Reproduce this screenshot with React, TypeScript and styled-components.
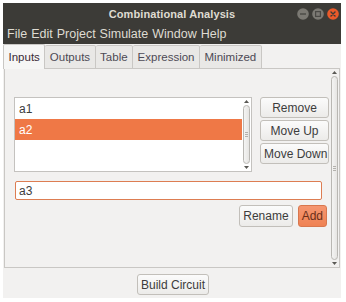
import React from "react";
import styled, { createGlobalStyle } from "styled-components";

const GlobalStyle = createGlobalStyle`
  body {
    margin: 0;
    background: #ffffff;
    font-family: "Liberation Sans", Arial, sans-serif;
  }
`;

const Window = styled.div`
  width: 338px;
  height: 295px;
  margin: 3px 0 0 3px;
  background: #f2f1f0;
  display: flex;
  flex-direction: column;
  box-sizing: border-box;
`;

const TitleBar = styled.div`
  height: 21px;
  background: #3c3b37;
  display: grid;
  grid-template-columns: 1fr auto 1fr;
  align-items: center;
`;

const Title = styled.div`
  grid-column: 2;
  color: #dfdbd2;
  font-size: 11px;
  font-weight: bold;
  letter-spacing: 0.1px;
`;

const Controls = styled.div`
  grid-column: 3;
  justify-self: end;
  display: flex;
  gap: 3px;
  padding-right: 2px;
`;

const MenuBar = styled.div`
  height: 20px;
  background: #3c3b37;
  display: flex;
  align-items: center;
  gap: 4px;
  padding-left: 4px;
`;

const MenuItem = styled.span`
  color: #dfdbd2;
  font-size: 12.5px;
`;

const TabBar = styled.div`
  display: flex;
  height: 25px;
  position: relative;
  z-index: 1;
`;

const Tab = styled.div<{ $active?: boolean }>`
  height: ${(p) => (p.$active ? "25px" : "24px")};
  margin-top: ${(p) => (p.$active ? "0" : "1px")};
  box-sizing: border-box;
  padding: 0 4.5px;
  display: flex;
  align-items: center;
  font-size: 11.5px;
  color: ${(p) => (p.$active ? "#3a2a36" : "#4d4a55")};
  background: ${(p) => (p.$active ? "#f6f6f5" : "#e9e8e6")};
  border: 1px solid #c9c7c4;
  border-bottom: ${(p) => (p.$active ? "none" : "1px solid #c9c7c4")};
  border-left: ${(p) => (p.$active ? "1px solid #c9c7c4" : "none")};
  border-radius: 2px 2px 0 0;
`;

const Pane = styled.div`
  height: 200px;
  margin: -1px 1px 0 1px;
  box-sizing: border-box;
  border: 1px solid #c9c7c4;
  background: #f2f1f0;
  display: flex;
`;

const PaneMain = styled.div`
  flex: 1;
  padding: 28px 1px 0 9px;
  display: flex;
  flex-direction: column;
`;

const TopRow = styled.div`
  display: flex;
  gap: 8px;
`;

const ListBox = styled.div`
  width: 238px;
  height: 75px;
  box-sizing: border-box;
  border: 1px solid #c4c2bf;
  background: #ffffff;
  display: flex;
`;

const Rows = styled.div`
  flex: 1;
`;

const Row = styled.div<{ $selected?: boolean }>`
  height: 21px;
  display: flex;
  align-items: center;
  padding-left: 4px;
  font-size: 12px;
  color: ${(p) => (p.$selected ? "#ffffff" : "#3c3c3c")};
  background: ${(p) => (p.$selected ? "#ef7846" : "transparent")};
`;

const ScrollCol = styled.div<{ $width: number }>`
  width: ${(p) => p.$width}px;
  display: flex;
  flex-direction: column;
  align-items: center;
  padding: 2px 0 2px;
  box-sizing: border-box;
`;

const Trough = styled.div`
  flex: 1;
  width: 7px;
  margin: 2px 0;
  box-sizing: border-box;
  border: 1px solid #b9b7b3;
  border-radius: 4px;
  background: linear-gradient(to right, #f4f4f3, #e6e5e3);
  display: flex;
  align-items: center;
  justify-content: center;
`;

const Grip = styled.div`
  width: 3px;
  height: 5px;
  background: repeating-linear-gradient(
    to bottom,
    #b3b1ad 0,
    #b3b1ad 1px,
    transparent 1px,
    transparent 2px
  );
`;

const ButtonCol = styled.div`
  width: 69px;
  display: flex;
  flex-direction: column;
  gap: 2px;
`;

const Button = styled.button<{ $primary?: boolean; $height?: number }>`
  height: ${(p) => p.$height ?? 21}px;
  box-sizing: border-box;
  padding: 0 3px;
  font-family: "Liberation Sans", Arial, sans-serif;
  font-size: 12px;
  color: ${(p) => (p.$primary ? "#6a2f1a" : "#3c3c3c")};
  background: ${(p) =>
    p.$primary
      ? "linear-gradient(to bottom, #f59670, #ef8253)"
      : "linear-gradient(to bottom, #fbfbfb, #ecebe9)"};
  border: 1px solid ${(p) => (p.$primary ? "#d8774e" : "#c2bfba")};
  border-radius: 3px;
  white-space: nowrap;
`;

const NameInput = styled.div`
  width: 307px;
  height: 19px;
  margin: 9px 0 0 1px;
  box-sizing: border-box;
  border: 1px solid #dd7d52;
  border-radius: 2px;
  background: #ffffff;
  display: flex;
  align-items: center;
  padding-left: 3px;
  font-size: 12px;
  color: #3c3c3c;
`;

const ActionRow = styled.div`
  display: flex;
  justify-content: flex-end;
  gap: 5px;
  margin-top: 5px;
  padding-right: 2px;
`;

const Footer = styled.div`
  flex: 1;
  display: flex;
  justify-content: center;
  padding-top: 6px;
  padding-left: 2px;
`;

const Arrow = ({ up }: { up?: boolean }) => (
  <svg width="5" height="3" viewBox="0 0 5 3">
    <path d={up ? "M0 3 L2.5 0 L5 3 Z" : "M0 0 L2.5 3 L5 0 Z"} fill="#5a5955" />
  </svg>
);

const Scrollbar = ({ width, grip }: { width: number; grip?: boolean }) => (
  <ScrollCol $width={width}>
    <Arrow up />
    <Trough>{grip && <Grip />}</Trough>
    <Arrow />
  </ScrollCol>
);

const WindowButton = ({ kind }: { kind: "min" | "max" | "close" }) => {
  const fill = kind === "close" ? "#ea5a2a" : "#7b7973";
  return (
    <svg width="12" height="12" viewBox="0 0 12 12">
      <circle cx="6" cy="6" r="5.8" fill={fill} />
      {kind === "min" && <rect x="3" y="5.3" width="6" height="1.4" fill="#4a4945" />}
      {kind === "max" && (
        <rect x="3.6" y="3.6" width="4.8" height="4.8" fill="none" stroke="#4a4945" strokeWidth="1.2" />
      )}
      {kind === "close" && (
        <path d="M4 4 L8 8 M8 4 L4 8" stroke="#3c3b37" strokeWidth="1.4" strokeLinecap="round" />
      )}
    </svg>
  );
};

const menus = ["File", "Edit", "Project", "Simulate", "Window", "Help"];
const tabs = ["Inputs", "Outputs", "Table", "Expression", "Minimized"];

export default function App() {
  return (
    <>
      <GlobalStyle />
      <Window>
        <TitleBar>
          <Title>Combinational Analysis</Title>
          <Controls>
            <WindowButton kind="min" />
            <WindowButton kind="max" />
            <WindowButton kind="close" />
          </Controls>
        </TitleBar>
        <MenuBar>
          {menus.map((m) => (
            <MenuItem key={m}>{m}</MenuItem>
          ))}
        </MenuBar>
        <TabBar>
          {tabs.map((t, i) => (
            <Tab key={t} $active={i === 0}>
              {t}
            </Tab>
          ))}
        </TabBar>
        <Pane>
          <PaneMain>
            <TopRow>
              <ListBox>
                <Rows>
                  <Row>a1</Row>
                  <Row $selected>a2</Row>
                </Rows>
                <Scrollbar width={9} grip />
              </ListBox>
              <ButtonCol>
                <Button>Remove</Button>
                <Button>Move Up</Button>
                <Button>Move Down</Button>
              </ButtonCol>
            </TopRow>
            <NameInput>a3</NameInput>
            <ActionRow>
              <Button $height={22}>Rename</Button>
              <Button $height={22} $primary>
                Add
              </Button>
            </ActionRow>
          </PaneMain>
          <Scrollbar width={9} grip />
        </Pane>
        <Footer>
          <Button>Build Circuit</Button>
        </Footer>
      </Window>
    </>
  );
}
